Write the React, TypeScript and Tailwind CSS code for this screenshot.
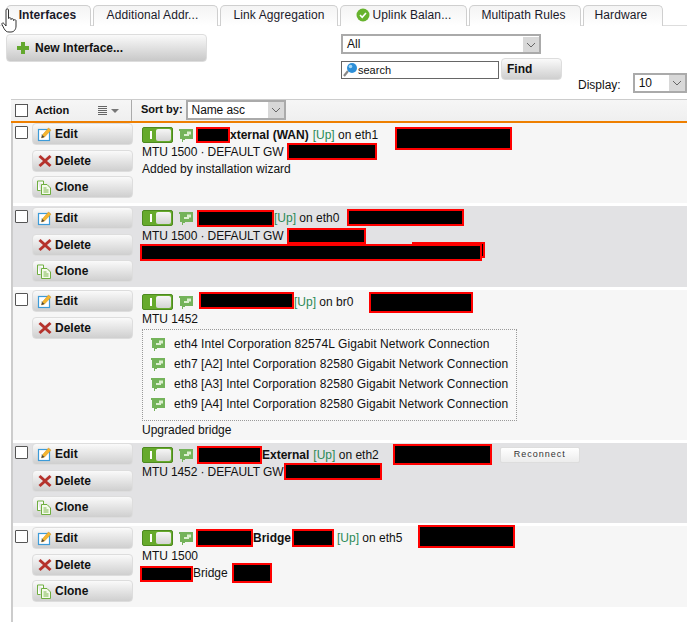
import type { ReactNode } from "react";

const FONT = "font-['Liberation_Sans',Arial,sans-serif]";

function Redact({ w, h, className = "" }: { w: number; h: number; className?: string }) {
  return (
    <span
      className={`block shrink-0 bg-black border-[2px] border-[#ff0000] ${className}`}
      style={{ width: w, height: h }}
    />
  );
}

function Chevron() {
  return (
    <svg width="10" height="6" viewBox="0 0 10 6">
      <path d="M1 1l4 4 4-4" fill="none" stroke="#666" strokeWidth="1" />
    </svg>
  );
}

function Select({ label, className, arrow = "w-[16px]" }: { label: string; className: string; arrow?: string }) {
  return (
    <div className={`flex items-stretch bg-white border-[2px] border-[#aaaaaa] ${className}`}>
      <span className="flex-1 pl-[4px] text-[12px] leading-[15px] self-center text-[#111]">{label}</span>
      <span className={`flex items-center justify-center bg-[#d8d8d8] ${arrow}`}>
        <Chevron />
      </span>
    </div>
  );
}

function Tab({ w, active, className = "", children }: { w: number; active?: boolean; className?: string; children: ReactNode }) {
  return (
    <div
      className={`h-[21px] pb-[2px] flex items-center justify-center gap-[3px] rounded-t-[5px] border border-b-0 border-[#cfcfcf] text-[12px] tracking-[0.1px] text-[#1a1a2a] bg-gradient-to-b from-[#f4f4f4] to-white ${
        active ? "font-bold" : ""
      } ${className}`}
      style={{ width: w }}
    >
      {children}
    </div>
  );
}

function EditIcon() {
  return (
    <svg width="15" height="15" viewBox="0 0 15 15">
      <rect x="1.500" y="2.500" width="11" height="11" fill="#fff" stroke="#3d9bd8" strokeWidth="1.200" />
      <path d="M4 8h3M4 10h2" stroke="#8fc4e8" strokeWidth="1" />
      <path d="M4.500 11l.8-3L11.500 1l2.500 2.200L7.500 10z" fill="#f5b62e" stroke="#d08f1a" strokeWidth=".5" />
      <path d="M4.500 11l.8-3 2.200 2z" fill="#444" />
    </svg>
  );
}

function DeleteIcon() {
  return (
    <svg width="14" height="14" viewBox="0 0 14 14">
      <path d="M2.500 1L7 5 11.500 1 13.500 3 9 7l4.500 4-2 2L7 9l-4.500 4-2-2L5 7 .5 3z" fill="#b5322c" />
    </svg>
  );
}

function CloneIcon() {
  return (
    <svg width="15" height="15" viewBox="0 0 15 15">
      <path d="M.5 1h6v3M3.500 10.500H.5V1" fill="#fff" stroke="#6fae3f" />
      <path d="M4.500 4.500h5.500l3.500 3.500v6.500H4.500z" fill="#f4fbea" stroke="#6fae3f" />
      <path d="M6.500 8h3M6.500 10h5M6.500 12h5" stroke="#6fae3f" strokeWidth=".9" />
    </svg>
  );
}

function ActionButton({ icon, label }: { icon: ReactNode; label: string }) {
  return (
    <div className="h-[22px] w-[101px] flex items-center gap-[3px] pl-[4px] rounded-[4px] border border-[#dddddd] bg-gradient-to-b from-[#fafafa] to-[#cfcfcf] text-[12px] font-bold text-[#111]">
      <span className="w-[15px] flex justify-center">{icon}</span>
      {label}
    </div>
  );
}

function Toggle() {
  return (
    <span className="block shrink-0 w-[31px] h-[16px] rounded-[2px] border border-[#4d8a1f] bg-[#66aa2c] relative">
      <span className="absolute left-[7px] top-[3px] w-[2px] h-[8px] bg-white" />
      <span className="absolute right-[1px] top-[1px] bottom-[1px] w-[15px] rounded-[2px] bg-gradient-to-b from-[#f6f6f6] to-[#d4d4d4]" />
    </span>
  );
}

function NicFlag() {
  return (
    <svg width="14" height="14" viewBox="0 0 14 14" className="shrink-0">
      <path d="M0 1h14v10H6v1H4v2H3v-3H1V3H0z" fill="#74b35a" />
      <path d="M8 3.500h4v3h-2v1.500H5V6h3z" fill="#dcefd0" />
    </svg>
  );
}

function Up({ className = "" }: { className?: string }) {
  return <span className={`text-[#2b8a57] ${className}`}>[Up]</span>;
}

function Line({ children, className = "" }: { children: ReactNode; className?: string }) {
  return <div className={`h-[17px] flex items-center whitespace-pre ${className}`}>{children}</div>;
}

function Mtu({ children }: { children: ReactNode }) {
  return <span className="tracking-[-0.1px]">{children}</span>;
}

function Row({
  shaded,
  clone = true,
  nudge,
  height,
  children,
}: {
  shaded?: boolean;
  clone?: boolean;
  nudge?: boolean;
  height: number;
  children: ReactNode;
}) {
  return (
    <div className={`flex ${shaded ? "bg-[#e2e2e4]" : "bg-[#f6f6f6]"}`} style={{ height }}>
      <div className={`w-[129px] shrink-0 flex pl-[2px] ${nudge ? "pt-[1px]" : ""}`}>
        <input type="checkbox" readOnly className="appearance-none w-[13px] h-[13px] mt-[3px] bg-white border border-[#555] rounded-[1px]" />
        <div className="ml-[4px] flex flex-col gap-[4.5px]">
          <ActionButton icon={<EditIcon />} label="Edit" />
          <ActionButton icon={<DeleteIcon />} label="Delete" />
          {clone && <ActionButton icon={<CloneIcon />} label="Clone" />}
        </div>
      </div>
      <div className="flex-1 min-w-0 pt-[3px] text-[12px] text-[#111]">{children}</div>
    </div>
  );
}

function Head({ children }: { children: ReactNode }) {
  return (
    <Line className="gap-[6px]">
      <Toggle />
      <NicFlag />
      <span className="flex items-center">{children}</span>
    </Line>
  );
}

function Port({ text }: { text: string }) {
  return (
    <div className="h-[20px] flex items-center tracking-[0.08px]">
      <span className="ml-[8px] mr-[9px] flex"><NicFlag /></span>
      {text}
    </div>
  );
}

export default function App() {
  return (
    <div className={`relative w-[687px] h-[622px] overflow-hidden bg-white ${FONT}`}>
      {/* tabs */}
      <div className="h-[26px] pt-[5px] pl-[6px] flex gap-[2px] border-b border-[#dddddd]">
        <Tab w={85} active className="pr-[2px]">Interfaces</Tab>
        <Tab w={125} className="pr-[6px]">Additional Addr...</Tab>
        <Tab w={118}>Link Aggregation</Tab>
        <Tab w={127}>
          <svg width="14" height="14" viewBox="0 0 14 14">
            <circle cx="7" cy="7" r="6.500" fill="#67b32e" />
            <path d="M4 7l2.200 2.300L10 5" fill="none" stroke="#fff" strokeWidth="1.600" />
          </svg>
          Uplink Balan...
        </Tab>
        <Tab w={112} className="pr-[3px]">Multipath Rules</Tab>
        <Tab w={80} className="pr-[4px]">Hardware</Tab>
      </div>

      {/* toolbar */}
      <div className="h-[73px] flex">
        <div className="ml-[6px] mt-[8px] w-[201px] h-[28px] flex items-center gap-[5px] pl-[9px] rounded-[4px] border border-[#dddddd] bg-gradient-to-b from-[#fafafa] to-[#c8c8c8] text-[12px] font-bold text-[#111]">
          <svg width="14" height="14" viewBox="0 0 14 14">
            <path d="M5 1h4v4h4v4H9v4H5V9H1V5h4z" fill="#63a82e" />
          </svg>
          New Interface...
        </div>
        <div className="ml-[134px] mt-[8px] w-[222px]">
          <Select label="All" className="w-[200px] h-[20px] pt-[1px]" />
          <div className="mt-[4px] flex items-start">
            <div className="mt-[3px] w-[158px] h-[18px] flex items-center bg-white border border-[#666] text-[11px] text-[#111]">
              <svg width="16" height="16" viewBox="0 0 16 16" className="shrink-0">
                <path d="M2 14l4-5" stroke="#888" strokeWidth="2.200" />
                <circle cx="10" cy="6" r="5" fill="#2e8fd8" />
                <circle cx="8.500" cy="4.500" r="1.800" fill="#a5d8f7" />
              </svg>
              search
            </div>
            <div className="ml-[2px] w-[61px] h-[22px] flex items-center pl-[5px] rounded-[4px] border border-[#dddddd] bg-gradient-to-b from-[#fafafa] to-[#cfcfcf] text-[12px] font-bold text-[#111]">
              Find
            </div>
          </div>
        </div>
        <div className="ml-[15px] mt-[47px] flex items-start text-[12px] text-[#111]">
          <span className="mt-[3px]">Display:</span>
          <Select label="10" className="ml-[12px] w-[54px] h-[20px] border-[1px]" />
        </div>
      </div>

      {/* list header */}
      <div className="ml-[11px] h-[24px] flex border-t border-b-[2px] border-t-[#cccccc] border-b-[#ee7f00] bg-gradient-to-b from-[#f6f6f6] to-[#efefef] text-[11px] font-bold text-[#111]">
        <div className="w-[121px] shrink-0 flex items-center pl-[4px] border-r border-[#aaaaaa] rounded-tl-[4px]">
          <span className="block w-[13px] h-[13px] bg-white border border-[#555]" />
          <span className="ml-[7px] text-[11px]">Action</span>
          <svg width="9" height="9" viewBox="0 0 9 9" className="ml-[29px]">
            <path d="M0 .5h9M0 2.500h9M0 4.500h9M0 6.500h9M0 8.500h9" stroke="#666" strokeWidth="1" />
          </svg>
          <svg width="8" height="4" viewBox="0 0 8 4" className="ml-[4px]">
            <path d="M0 0h8L4 4z" fill="#777" />
          </svg>
        </div>
        <div className="flex items-start pl-[9px]">
          <span className="mt-[1px]">Sort by:</span>
          <Select label="Name asc" className="ml-[3px] w-[100px] h-[20px] font-normal tracking-[-0.1px]" />
        </div>
      </div>

      {/* rows */}
      <div className="ml-[11px] border-l-2 border-[#cccccc] h-[500px] flex flex-col gap-[3px]">
        <Row height={80}>
          <Head>
            <Redact w={34} h={16} className="-ml-[3px]" />
            <b>xternal (WAN)</b>
            <Up className="ml-[4px]" /> on eth1
            <Redact w={117} h={23} className="ml-[17px] translate-y-[4px]" />
          </Head>
          <Line>
            <Mtu>MTU 1500 · DEFAULT GW </Mtu>
            <Redact w={90} h={17} />
          </Line>
          <Line>Added by installation wizard</Line>
        </Row>

        <Row shaded nudge height={81}>
          <Head>
            <Redact w={77} h={17} className="-ml-[2px] translate-y-[1px]" />
            <Up /> on eth0
            <Redact w={117} h={17} className="ml-[8px]" />
          </Head>
          <Line className="mt-[1px]">
            <Mtu>MTU 1500 · DEFAULT GW </Mtu>
            <Redact w={79} h={16} />
          </Line>
          <Line className="relative">
            <Redact w={73} h={16} className="absolute left-[270px] -top-[2px]" />
            <Redact w={342} h={17} className="relative -ml-[2px]" />
          </Line>
        </Row>

        <Row clone={false} height={150}>
          <Head>
            <Redact w={95} h={17} className="-translate-y-[1px]" />
            <Up /> on br0
            <Redact w={104} h={21} className="ml-[16px] translate-y-[1px]" />
          </Head>
          <Line>MTU 1452</Line>
          <div className="mt-[2px] w-[375px] h-[92px] border border-dotted border-[#999] py-[4px] bg-[#f8f8f8]">
            <Port text="eth4 Intel Corporation 82574L Gigabit Network Connection" />
            <Port text="eth7 [A2] Intel Corporation 82580 Gigabit Network Connection" />
            <Port text="eth8 [A3] Intel Corporation 82580 Gigabit Network Connection" />
            <Port text="eth9 [A4] Intel Corporation 82580 Gigabit Network Connection" />
          </div>
          <Line>Upgraded bridge</Line>
        </Row>

        <Row shaded height={80}>
          <Head>
            <Redact w={65} h={18} className="-ml-[2px]" />
            <b>External</b>
            <Up className="ml-[4px]" /> on eth2
            <Redact w={99} h={21} className="ml-[14px]" />
            <span className="ml-[8px] w-[80px] h-[16px] flex items-center justify-center rounded-[2px] border border-[#dddddd] bg-gradient-to-b from-white to-[#ececec] text-[9px] tracking-[1px] text-[#333]">
              Reconnect
            </span>
          </Head>
          <Line>
            <Mtu>MTU 1452 · DEFAULT GW</Mtu>
            <Redact w={98} h={17} className="ml-[1px]" />
          </Line>
        </Row>

        <Row nudge height={81}>
          <Head>
            <Redact w={57} h={18} className="-ml-[3px]" />
            <b>Bridge</b>
            <Redact w={42} h={18} className="ml-[1px]" />
            <Up className="ml-[3px]" /> on eth5
            <Redact w={97} h={23} className="ml-[16px] -translate-y-[1px]" />
          </Head>
          <Line className="mt-[1px]">MTU 1500</Line>
          <Line>
            <Redact w={53} h={16} className="-ml-[2px] translate-y-[1px]" />
            {" "}Bridge <Redact w={40} h={20} className="ml-[1px]" />
          </Line>
        </Row>
      </div>

      {/* mouse cursor */}
      <svg width="18" height="25" viewBox="0 0 18 25" className="absolute left-[1px] top-[8px]">
        <path
          d="M5 2c0-1.500 2.500-1.500 2.500 0v8.500c0-1 2.500-1 2.500 0v1c0-1 2.500-1 2.500 0v1c0-1 2.500-1 2.500 0V18c0 3.500-2 6-5 6H8c-2.500 0-3.500-1-5-3.500L1 16.500c-.5-1.500 1-2.200 2-1L5 18z"
          fill="#fff"
          stroke="#333"
          strokeWidth="1"
        />
      </svg>
    </div>
  );
}
